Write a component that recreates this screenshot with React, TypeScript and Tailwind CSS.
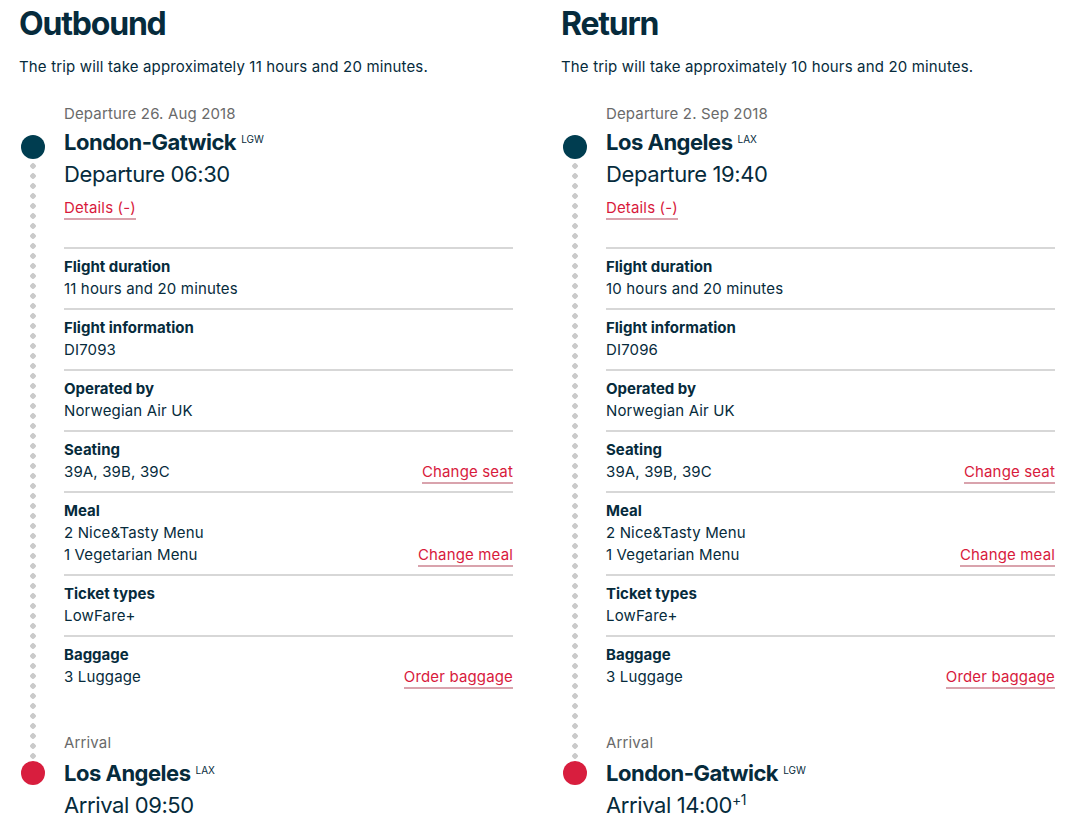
const legs = [
  {
    title: "Outbound",
    intro: "The trip will take approximately 11 hours and 20 minutes.",
    date: "Departure 26. Aug 2018",
    from: "London-Gatwick",
    fromCode: "LGW",
    depart: "06:30",
    duration: "11 hours and 20 minutes",
    flight: "DI7093",
    to: "Los Angeles",
    toCode: "LAX",
    arrive: "09:50",
    plus: "",
  },
  {
    title: "Return",
    intro: "The trip will take approximately 10 hours and 20 minutes.",
    date: "Departure 2. Sep 2018",
    from: "Los Angeles",
    fromCode: "LAX",
    depart: "19:40",
    duration: "10 hours and 20 minutes",
    flight: "DI7096",
    to: "London-Gatwick",
    toCode: "LGW",
    arrive: "14:00",
    plus: "+1",
  },
];

type Leg = (typeof legs)[number];

function TextLink({ children }: { children: React.ReactNode }) {
  return (
    <a
      href="#"
      className="inline-block pt-[1px] -mb-[1px] leading-[20px] text-[#d81a3c] border-b-2 border-[#d9a3ad]"
    >
      {children}
    </a>
  );
}

function Section({
  label,
  lines,
  link,
  last,
}: {
  label: string;
  lines: string[];
  link?: string;
  last?: boolean;
}) {
  return (
    <div className={`border-t-2 border-[#d7d7d7] pt-[7px] ${last ? "" : "pb-[8px]"}`}>
      <div className="font-bold leading-[22px] tracking-[0px]">{label}</div>
      {lines.map((l, i) => (
        <div key={i} className="flex justify-between items-start leading-[22px]">
          <span>{l}</span>
          {link && i === lines.length - 1 && <TextLink>{link}</TextLink>}
        </div>
      ))}
    </div>
  );
}

function Code({ children }: { children: React.ReactNode }) {
  return (
    <span className="ml-[5px] align-top relative top-[-3px] text-[10px] font-normal tracking-[0px]">
      {children}
    </span>
  );
}

function Column({ leg }: { leg: Leg }) {
  return (
    <div className="w-[494px]">
      <h2 className="pt-[4px] text-[32px] leading-[40px] font-bold tracking-[-1.2px]">{leg.title}</h2>
      <p className="mt-[12px] text-[15px] leading-[22px] tracking-[0.16px]">{leg.intro}</p>

      <div className="flex">
        <div className="w-[28px] flex flex-col items-center">
          <div className="h-[57px]" />
          <div className="w-[24px] h-[24px] rounded-full bg-[#003d50]" />
          <div className="flex-1 w-[10px] my-[2px] bg-[radial-gradient(circle,#cacaca_2.5px,transparent_3px)] bg-[length:10px_10px] bg-repeat-y" />
          <div className="w-[24px] h-[24px] rounded-full bg-[#d81e3e]" />
          <div className="h-[36px]" />
        </div>

        <div className="ml-[17px] flex-1 text-[15px] tracking-[0.15px]">
          <div className="mt-[24px] leading-[24px] text-[#6a6a6a]">{leg.date}</div>
          <div className="leading-[32px] text-[22px] font-bold tracking-[-0.5px]">
            {leg.from}
            <Code>{leg.fromCode}</Code>
          </div>
          <div className="leading-[32px] text-[22px] tracking-[-0.4px]">Departure {leg.depart}</div>
          <div className="mt-[7px]">
            <a href="#" className="inline-block leading-[20px] text-[#d81a3c] border-b-2 border-[#d9a3ad]">
              Details (-)
            </a>
          </div>

          <div className="mt-[27px]">
            <Section label="Flight duration" lines={[leg.duration]} />
            <Section label="Flight information" lines={[leg.flight]} />
            <Section label="Operated by" lines={["Norwegian Air UK"]} />
            <Section label="Seating" lines={["39A, 39B, 39C"]} link="Change seat" />
            <Section label="Meal" lines={["2 Nice&Tasty Menu", "1 Vegetarian Menu"]} link="Change meal" />
            <Section label="Ticket types" lines={["LowFare+"]} />
            <Section label="Baggage" lines={["3 Luggage"]} link="Order baggage" last />
          </div>

          <div className="mt-[43px] leading-[24px] text-[#6a6a6a]">Arrival</div>
          <div className="mt-[2px] leading-[32px] text-[22px] font-bold tracking-[-0.5px]">
            {leg.to}
            <Code>{leg.toCode}</Code>
          </div>
          <div className="leading-[32px] text-[22px] tracking-[-0.4px]">
            Arrival {leg.arrive}
            {leg.plus && <sup className="text-[14px] top-[-8px] align-baseline relative">{leg.plus}</sup>}
          </div>
        </div>
      </div>
    </div>
  );
}

export default function App() {
  return (
    <div className="min-h-screen bg-white text-[#062b3c] font-['Inter','Liberation_Sans',sans-serif]">
      <div className="flex gap-[48px] pl-[19px]">
        {legs.map((leg) => (
          <Column key={leg.title} leg={leg} />
        ))}
      </div>
    </div>
  );
}
